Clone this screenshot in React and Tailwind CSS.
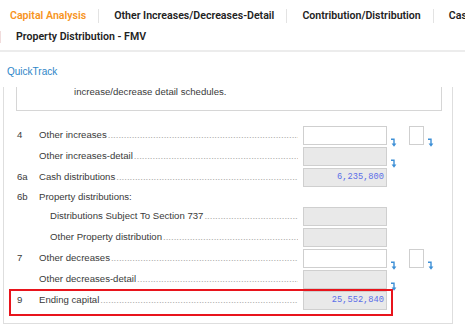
import React from 'react';

const Arrow = () => (
  <svg width="6" height="9" viewBox="0 0 6 9" className="block">
    <path d="M0 1.2 H3 V6.5" fill="none" stroke="#3d8fd6" strokeWidth="1.4" />
    <path d="M0.6 5.6 H5.4 L3 8.8 Z" fill="#3d8fd6" />
  </svg>
);

const Dots = () => (
  <span className="flex-1 overflow-hidden whitespace-nowrap text-[#a8a8a8] ml-[1px]">
    {'.'.repeat(120)}
  </span>
);

const Box = ({ gray, value }) => (
  <div
    className={`w-[84px] h-[19px] border border-[#cfcfcf] flex items-center justify-end pr-[2px] text-[8.7px] text-[#5b6ee8] ${
      gray ? 'bg-[#e9e9e9]' : 'bg-white'
    }`}
    style={{ fontFamily: '"Liberation Mono", monospace' }}
  >
    {value}
  </div>
);

const Row = ({ num, label, indent, box, gray, value, arrow, check, noDots }) => (
  <div className={`flex items-center ${box ? 'h-[21px] pb-[2px]' : 'h-[18px] pb-[2px]'}`}>
    <div className="w-[22px] shrink-0">{num}</div>
    <div className={`flex-1 flex items-center min-w-0 ${indent ? 'pl-[11px]' : ''}`}>
      <span className="whitespace-nowrap">{label}</span>
      {!noDots && <Dots />}
    </div>
    <div className="w-[5px] shrink-0" />
    <div className="w-[84px] shrink-0">{box && <Box gray={gray} value={value} />}</div>
    <div className="w-[22px] shrink-0 flex h-full items-end pl-[4px]">
      {arrow && <div className="translate-y-[2px]"><Arrow /></div>}
    </div>
    <div className="w-[30px] shrink-0 flex h-full items-end">
      {check && (
        <>
          <div className="w-[15px] h-[19px] border border-[#cfcfcf] bg-white self-start" />
          <div className="ml-[4px] translate-y-[2px]"><Arrow /></div>
        </>
      )}
    </div>
  </div>
);

const tabs = ['Other Increases/Decreases-Detail', 'Contribution/Distribution', 'Cash Flow'];

export default function App() {
  return (
    <div
      className="w-[465px] h-[335px] bg-white overflow-hidden text-[#3a3a3a]"
      style={{ fontFamily: '"Liberation Sans", Arial, sans-serif' }}
    >
      {/* tab bar */}
      <div
        className="border-b-2 border-[#ececec] h-[52px] text-[10.6px] font-semibold text-[#222]"
        style={{ fontFamily: 'Roboto, "Liberation Sans", sans-serif' }}
      >
        <div className="flex items-center h-[30px] pt-[2px] whitespace-nowrap overflow-hidden">
          <div className="pl-[10px] pr-[12px] text-[#f7941d]">Capital Analysis</div>
          {tabs.map(t => (
            <div key={t} className="flex items-center">
              <div className="w-[1px] h-[14px] bg-[#e3e3e3]" />
              <div className="pl-[15px] pr-[12px]">{t}</div>
            </div>
          ))}
        </div>
        <div className="flex items-center h-[14px]">
          <div className="w-[1px] h-[12px] bg-[#f1dcdc]" />
          <div className="pl-[15px]">Property Distribution - FMV</div>
        </div>
      </div>

      {/* QuickTrack */}
      <div className="h-[35px] pl-[7px] pt-[12px] text-[10px] text-[#2e86c8]">QuickTrack</div>

      {/* panel */}
      <div className="ml-[3px] w-[450px] border-l border-r border-b border-[#dedede] pl-[12px] pr-[13px] pb-[7px] text-[9.6px]">
        <div className="border-l border-r border-b border-[#d6d6d6] h-[24px] pl-[57px] leading-[10px] mr-[-3px]">
          increase/decrease detail schedules.
        </div>

        <div className="pt-[15px] pl-[1px]">
          <Row num="4" label="Other increases" box arrow check />
          <Row label="Other increases-detail" box gray arrow />
          <Row num="6a" label="Cash distributions" box gray value="6,235,800" />
          <Row num="6b" label="Property distributions:" noDots />
          <Row label="Distributions Subject To Section 737" indent box gray />
          <Row label="Other Property distribution" indent box gray />
          <Row num="7" label="Other decreases" box arrow check />
          <Row label="Other decreases-detail" box gray arrow />
          <div className="-ml-[8px] -mt-[2px] w-[384px] border-2 border-[#e8141c] pl-[6px] pb-[4px]">
            <div className="flex items-center h-[19px]">
              <div className="w-[22px] shrink-0">9</div>
              <div className="flex-1 flex items-center min-w-0">
                <span className="whitespace-nowrap">Ending capital</span>
                <Dots />
              </div>
              <div className="w-[5px] shrink-0" />
              <Box gray value="25,552,840" />
              <div className="w-[4px] shrink-0" />
            </div>
          </div>
        </div>
      </div>
    </div>
  );
}
